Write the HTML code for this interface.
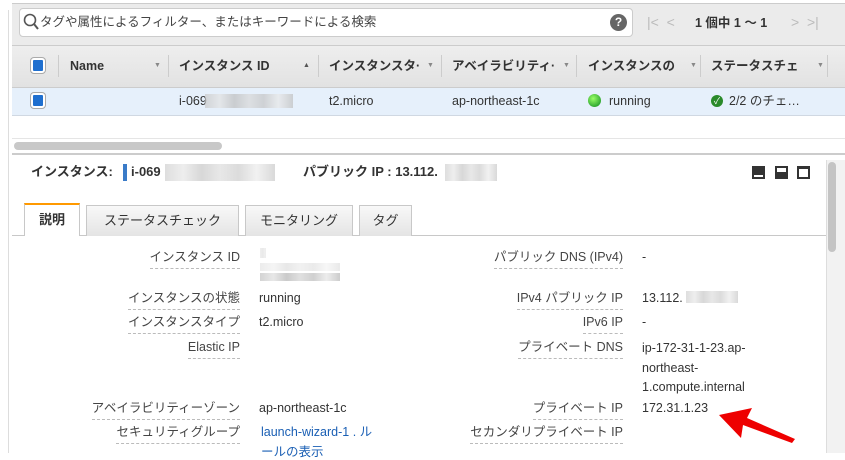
<!DOCTYPE html>
<html><head><meta charset="utf-8"><style>
*{margin:0;padding:0;box-sizing:border-box}
body{width:845px;height:453px;overflow:hidden;background:#fff;font-family:"Liberation Sans","Noto Sans CJK JP",sans-serif;font-size:12.5px;line-height:16px;color:#333;position:relative}
.a{position:absolute;white-space:nowrap;line-height:16px}
.lbl{position:absolute;text-align:right;white-space:nowrap;color:#444;line-height:16px}
.lbl span{display:inline-block;border-bottom:1px dashed #bbb;padding-bottom:3px;line-height:16px}
.v{position:absolute;white-space:nowrap;color:#333;line-height:16px}
.blur{position:absolute;background:linear-gradient(90deg,#c8c8c8,#e2e2e2,#bdbdbd,#d8d8d8,#c4c4c4,#e8e8e8,#c0c0c0)}
.cb{position:absolute;width:14px;height:15px;background:#1f6fcf;border:2px solid #fff;border-radius:3px;box-shadow:0 0 0 1px #aaa}
.sep{position:absolute;top:55px;width:1px;height:22px;background:#ccc}
.th{position:absolute;top:58px;font-weight:bold;color:#333;font-size:12.5px;line-height:16px;white-space:nowrap}
.tab{position:absolute;top:205px;height:31px;border:1px solid #c8c8c8;border-bottom:none;background:linear-gradient(#f8f8f8,#e4e4e4);font-size:13px;line-height:29px;text-align:center;color:#333}
.ar{position:absolute;top:62px;font-size:7px;color:#888;line-height:8px}
</style></head><body>
<div class="a" style="left:8px;top:10px;width:1px;height:443px;background:#ddd"></div>
<div class="a" style="left:12px;top:3px;width:833px;height:42px;background:#ebebeb;border-top:1px solid #ccc"></div>
<div class="a" style="left:19px;top:8px;width:614px;height:29px;background:#fff;border:1px solid #ccc;border-radius:4px"></div>
<svg class="a" style="left:23px;top:13px" width="16" height="18"><circle cx="7" cy="7" r="5.5" fill="none" stroke="#555" stroke-width="1.6"/><line x1="11" y1="11" x2="15" y2="16" stroke="#555" stroke-width="2"/></svg>
<div class="a" style="left:40px;top:14px;color:#444;font-size:12.5px">タグや属性によるフィルター、またはキーワードによる検索</div>
<div class="a" style="left:610px;top:14px;width:17px;height:17px;border-radius:50%;background:#666;color:#fff;font-weight:bold;font-size:12px;text-align:center;line-height:17px">?</div>
<div class="a" style="left:647px;top:14px;color:#bbb;font-size:14px">|&lt;&nbsp;&nbsp;&lt;</div>
<div class="a" style="left:695px;top:15px;font-weight:bold;color:#333">1 個中 1 ～ 1</div>
<div class="a" style="left:791px;top:14px;color:#bbb;font-size:14px">&gt;&nbsp;&nbsp;&gt;|</div>
<div class="a" style="left:12px;top:45px;width:833px;height:43px;background:linear-gradient(#eee,#e2e2e2);border-top:1px solid #ccc;border-bottom:1px solid #ccc"></div>
<div class="cb" style="left:31px;top:58px"></div>
<div class="sep" style="left:58px"></div>
<div class="th" style="left:70px">Name</div><div class="ar" style="left:154px">▼</div>
<div class="sep" style="left:168px"></div>
<div class="th" style="left:179px">インスタンス ID</div><div class="ar" style="left:303px;color:#555">▲</div>
<div class="sep" style="left:318px"></div>
<div class="th" style="left:329px">インスタンスタ·</div><div class="ar" style="left:427px">▼</div>
<div class="sep" style="left:441px"></div>
<div class="th" style="left:452px">アベイラビリティ·</div><div class="ar" style="left:563px">▼</div>
<div class="sep" style="left:576px"></div>
<div class="th" style="left:588px">インスタンスの</div><div class="ar" style="left:690px">▼</div>
<div class="sep" style="left:700px"></div>
<div class="th" style="left:711px">ステータスチェ</div><div class="ar" style="left:817px">▼</div>
<div class="sep" style="left:827px"></div>
<div class="a" style="left:12px;top:88px;width:833px;height:28px;background:#e6f0fb;border-bottom:1px solid #d0d8e2"></div>
<div class="cb" style="left:31px;top:93px"></div>
<div class="a" style="left:179px;top:93px">i-069</div><div class="blur" style="left:205px;top:94px;width:88px;height:14px;opacity:.7"></div>
<div class="a" style="left:329px;top:93px">t2.micro</div>
<div class="a" style="left:452px;top:93px">ap-northeast-1c</div>
<div class="a" style="left:588px;top:94px;width:13px;height:13px;border-radius:50%;background:radial-gradient(circle at 40% 35%,#9f6,#3a3 70%)"></div>
<div class="a" style="left:609px;top:93px">running</div>
<div class="a" style="left:711px;top:95px;width:12px;height:12px;border-radius:50%;background:#2a8a2a;color:#fff;font-size:9px;text-align:center;line-height:12px">✓</div>
<div class="a" style="left:729px;top:93px">2/2 のチェ…</div>
<div class="a" style="left:12px;top:138px;width:833px;height:1px;background:#e5e5e5"></div>
<div class="a" style="left:14px;top:142px;width:208px;height:8px;border-radius:4px;background:#c8c8c8"></div>
<div class="a" style="left:12px;top:153px;width:833px;height:2px;background:#ccc"></div>
<div class="a" style="left:826px;top:160px;width:19px;height:293px;background:#f2f2f2;border-left:1px solid #ddd"></div>
<div class="a" style="left:828px;top:162px;width:8px;height:90px;border-radius:4px;background:#c4c4c4"></div>
<div class="a" style="left:31px;top:164px;font-weight:bold;font-size:13px">インスタンス:</div>
<div class="a" style="left:123px;top:164px;width:4px;height:17px;background:#3a7bc8"></div>
<div class="a" style="left:131px;top:164px;font-weight:bold;font-size:13px">i-069</div><div class="blur" style="left:165px;top:164px;width:110px;height:17px;opacity:.6"></div>
<div class="a" style="left:303px;top:164px;font-weight:bold;font-size:13px">パブリック IP : 13.112.</div><div class="blur" style="left:445px;top:164px;width:52px;height:17px;opacity:.6"></div>
<div class="a" style="left:752px;top:166px;width:13px;height:13px;background:#333"><div style="position:absolute;left:2px;right:2px;bottom:2px;height:2px;background:#fff"></div></div>
<div class="a" style="left:775px;top:166px;width:13px;height:13px;background:#333"><div style="position:absolute;left:2px;right:2px;top:2px;height:4px;background:#fff"></div></div>
<div class="a" style="left:797px;top:166px;width:13px;height:13px;background:#fff;border:2px solid #333;border-top-width:3px"></div>
<div class="a" style="left:12px;top:235px;width:814px;height:1px;background:#c8c8c8"></div>
<div class="tab" style="left:24px;top:203px;width:56px;height:33px;background:#fff;border-top:2px solid #f90;font-weight:bold">説明</div>
<div class="tab" style="left:86px;width:153px">ステータスチェック</div>
<div class="tab" style="left:245px;width:108px">モニタリング</div>
<div class="tab" style="left:359px;width:53px">タグ</div>
<div class="lbl" style="right:605px;top:249px"><span>インスタンス ID</span></div>
<div class="blur" style="left:260px;top:248px;width:6px;height:10px;opacity:.4"></div>
<div class="blur" style="left:260px;top:263px;width:80px;height:8px;opacity:.35"></div>
<div class="blur" style="left:260px;top:273px;width:80px;height:8px;opacity:.8"></div>
<div class="lbl" style="right:605px;top:290px"><span>インスタンスの状態</span></div><div class="v" style="left:259px;top:290px">running</div>
<div class="lbl" style="right:605px;top:314px"><span>インスタンスタイプ</span></div><div class="v" style="left:259px;top:314px">t2.micro</div>
<div class="lbl" style="right:605px;top:339px"><span>Elastic IP</span></div>
<div class="lbl" style="right:605px;top:400px"><span>アベイラビリティーゾーン</span></div><div class="v" style="left:259px;top:400px">ap-northeast-1c</div>
<div class="lbl" style="right:605px;top:424px"><span>セキュリティグループ</span></div><div class="v" style="left:261px;top:424px;color:#1a5fb4">launch-wizard-1 . ル</div><div class="v" style="left:261px;top:444px;color:#1a5fb4">ールの表示</div>
<div class="lbl" style="right:222px;top:249px"><span>パブリック DNS (IPv4)</span></div><div class="v" style="left:642px;top:249px">-</div>
<div class="lbl" style="right:222px;top:290px"><span>IPv4 パブリック IP</span></div><div class="v" style="left:642px;top:290px">13.112.</div><div class="blur" style="left:686px;top:291px;width:52px;height:12px;opacity:.6"></div>
<div class="lbl" style="right:222px;top:314px"><span>IPv6 IP</span></div><div class="v" style="left:642px;top:314px">-</div>
<div class="lbl" style="right:222px;top:339px"><span>プライベート DNS</span></div>
<div class="v" style="left:642px;top:339px;line-height:19.5px">ip-172-31-1-23.ap-<br>northeast-<br>1.compute.internal</div>
<div class="lbl" style="right:222px;top:400px"><span>プライベート IP</span></div><div class="v" style="left:642px;top:400px">172.31.1.23</div>
<div class="lbl" style="right:222px;top:424px"><span>セカンダリプライベート IP</span></div>
<svg class="a" style="left:715px;top:405px" width="85" height="40"><polygon points="4,10 37,3 32,13 80,34 77,38 28,20 26,33" fill="#e00"/></svg>
</body></html>
